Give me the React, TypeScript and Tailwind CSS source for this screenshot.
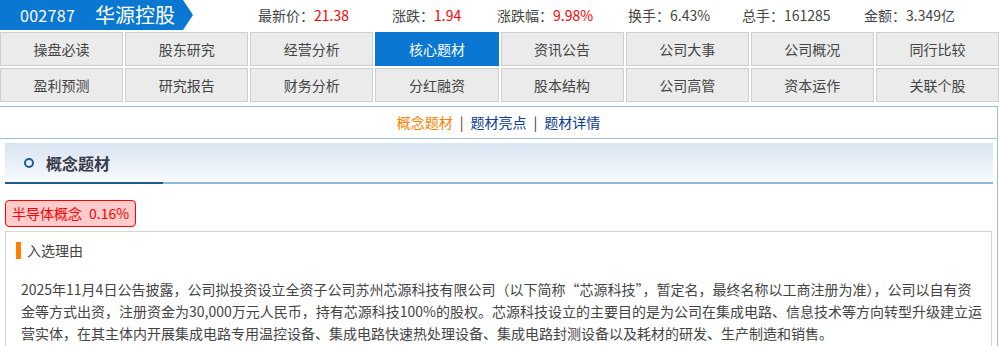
const stats = [
  { label: "最新价", value: "21.38", red: true, w: "w-[134px]" },
  { label: "涨跌", value: "1.94", red: true, w: "w-[105px]" },
  { label: "涨跌幅", value: "9.98%", red: true, w: "w-[131px]" },
  { label: "换手", value: "6.43%", red: false, w: "w-[114px]" },
  { label: "总手", value: "161285", red: false, w: "w-[122px]" },
  { label: "金额", value: "3.349亿", red: false, w: "" },
];

const navRows = [
  ["操盘必读", "股东研究", "经营分析", "核心题材", "资讯公告", "公司大事", "公司概况", "同行比较"],
  ["盈利预测", "研究报告", "财务分析", "分红融资", "股本结构", "公司高管", "资本运作", "关联个股"],
];

export default function App() {
  return (
    <div className="w-[999px] h-[346px] overflow-hidden bg-white text-[14px] text-[#333] font-['Noto_Sans_CJK_SC',sans-serif]">
      {/* top bar */}
      <div className="flex items-center h-[30px]">
        <div className="flex items-center h-[30px] w-[183px] bg-[#0a78d3] text-white pl-[20px]">
          <span className="text-[16px] tracking-[0.3px]">002787</span>
          <span className="text-[20px] ml-[20px]">华源控股</span>
        </div>
        <div className="w-0 h-0 border-y-[15px] border-y-transparent border-l-[10px] border-l-[#0a78d3]" />
        <div className="flex items-center ml-[65px] text-[#444]">
          {stats.map((s) => (
            <div key={s.label} className={`${s.w} whitespace-nowrap`}>
              {s.label}：
              <span className={s.red ? "text-[#ff0000]" : "text-[#444]"}>{s.value}</span>
            </div>
          ))}
        </div>
      </div>

      {/* nav buttons */}
      <div className="mt-[2px] flex flex-col gap-[2px]">
        {navRows.map((row, i) => (
          <div key={i} className="grid grid-cols-8 gap-[2px]">
            {row.map((name) => (
              <div
                key={name}
                className={
                  name === "核心题材"
                    ? "h-[34px] flex items-center justify-center bg-[#0a78d3] border border-[#0a78d3] text-white"
                    : "h-[34px] flex items-center justify-center bg-[#ebebeb] border border-[#cecece] text-[#444]"
                }
              >
                {name}
              </div>
            ))}
          </div>
        ))}
      </div>

      {/* content panel */}
      <div className="mt-[4px] w-[998px] border-t border-r border-[#9cbfd6]">
        <div className="h-[32px] border-b border-[#9cbfd6] flex items-center justify-center">
          <span className="text-[#ff7f00]">概念题材</span>
          <span className="mx-[7px] text-[#333]">|</span>
          <span className="text-[#0b3b92]">题材亮点</span>
          <span className="mx-[7px] text-[#333]">|</span>
          <span className="text-[#0b3b92]">题材详情</span>
        </div>

        <div className="pl-[5px] pr-[4px]">
          <div className="mt-[4px] flex flex-col bg-gradient-to-b from-[#d8e4f1] to-[#fafcfe]">
            <div className="h-[39px] flex items-center pl-[19px]">
              <div className="w-[10px] h-[10px] rounded-full border-2 border-[#1b5d8c]" />
              <span className="ml-[12px] text-[16px] font-bold text-[#3a3a4a]">概念题材</span>
            </div>
            <div className="flex h-[2px]">
              <div className="w-[158px] bg-[#1b5d8c]" />
              <div className="flex-1 bg-[#8dbad6]" />
            </div>
          </div>

          <div className="mt-[16px] inline-flex items-center h-[27px] px-[6px] border border-[#ff0000] bg-[#ffcccc] rounded-[4px] text-[#ff0000]">
            半导体概念<span className="ml-[7px]">0.16%</span>
          </div>

          <div className="mt-[4px] w-[987px] border border-[#d4d4d4] h-[140px]">
            <div className="flex items-center mt-[10px] ml-[10px] h-[17px]">
              <div className="w-[5px] h-[17px] bg-[#ff8000]" />
              <span className="ml-[6px] text-[#444]">入选理由</span>
            </div>
            <p className="mt-[19px] pl-[15px] pr-[6px] leading-[22px] text-[#444]">
              2025年11月4日公告披露，公司拟投资设立全资子公司苏州芯源科技有限公司（以下简称“芯源科技”，暂定名，最终名称以工商注册为准），公司以自有资金等方式出资，注册资金为30,000万元人民币，持有芯源科技100%的股权。芯源科技设立的主要目的是为公司在集成电路、信息技术等方向转型升级建立运营实体，在其主体内开展集成电路专用温控设备、集成电路快速热处理设备、集成电路封测设备以及耗材的研发、生产制造和销售。
            </p>
          </div>
        </div>
      </div>
    </div>
  );
}
